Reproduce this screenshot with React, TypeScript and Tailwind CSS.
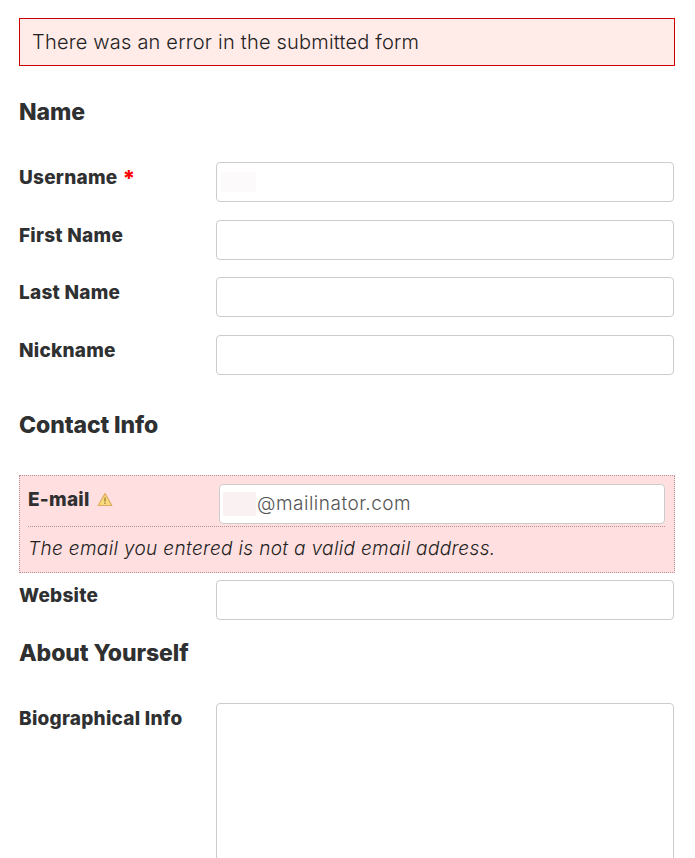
function Field({ label, required }: { label: string; required?: boolean }) {
  return (
    <div className="flex h-[40px] w-full">
      <label className="w-[197px] shrink-0 pt-[3px] text-[19px] font-extrabold leading-[26px] tracking-[0.25px] text-[#2f3031]">
        {label}
        {required && <span className="relative top-[2px] ml-[5px] text-[22px] leading-[20px] text-[#ff0000]">*</span>}
      </label>
      {required ? (
        <div className="flex h-[40px] w-[458px] items-center rounded border border-[#cccccc] bg-white pl-[4px]">
          <span className="h-[20px] w-[35px] bg-[#fcfafa]" />
        </div>
      ) : (
        <input className="h-[40px] w-[458px] rounded border border-[#cccccc] bg-white" />
      )}
    </div>
  )
}

function Heading({ children, className }: { children: string; className: string }) {
  return <h2 className={"text-[23px] font-extrabold leading-[30px] tracking-[-0.1px] text-[#2f3031] " + className}>{children}</h2>
}

function WarnIcon() {
  return (
    <svg width="16" height="15" viewBox="0 0 16 15" className="ml-[7px] mt-[5px]">
      <path d="M8 1.5 L14.8 13.5 H1.2 Z" fill="#f6dc7c" stroke="#e0ab62" strokeWidth="1.2" strokeLinejoin="round" />
      <rect x="7.3" y="5.5" width="1.4" height="4.2" fill="#a9803a" />
      <rect x="7.3" y="10.6" width="1.4" height="1.4" fill="#a9803a" />
    </svg>
  )
}

export default function App() {
  return (
    <div className="h-[858px] overflow-hidden bg-white px-[19px] pt-[18px] font-['Inter',sans-serif]">
      <div className="flex h-[48px] w-[656px] items-center border border-[#cc0000] bg-[#ffebe8] pl-[12px] text-[20px] font-light tracking-[0.2px] text-[#222222]">
        There was an error in the submitted form
      </div>

      <Heading className="mt-[31px]">Name</Heading>

      <div className="mt-[35px] flex w-[655px] flex-col gap-[18px]">
        <Field label="Username" required />
        <Field label="First Name" />
        <div className="-mt-[1px]">
          <Field label="Last Name" />
        </div>
        <Field label="Nickname" />
      </div>

      <Heading className="mt-[35px]">Contact Info</Heading>

      <div className="mt-[35px] h-[98px] w-[656px] border border-dotted border-[#b89090] bg-[#ffdfdf] pl-[8px] pr-[9px] pt-[8px]">
        <div className="flex h-[43px] border-b border-dotted border-[#b89090]">
          <span className="flex w-[191px] shrink-0 pt-[3px] text-[19px] font-extrabold leading-[26px] tracking-[0.25px] text-[#2f3031]">
            E-mail
            <WarnIcon />
          </span>
          <div className="flex h-[40px] w-[446px] items-center rounded border border-[#cccccc] bg-white pl-[3px] text-[19px] font-light tracking-[0.5px] text-[#555555]">
            <span className="mr-[1px] h-[24px] w-[33px] bg-[#f9f1f2]" />
            @mailinator.com
          </div>
        </div>
        <p className="mt-[9px] text-[19px] font-light italic leading-[26px] tracking-[0.35px] text-[#222222]">
          The email you entered is not a valid email address.
        </p>
      </div>

      <div className="mt-[7px] w-[655px]">
        <Field label="Website" />
      </div>

      <Heading className="mt-[18px]">About Yourself</Heading>

      <div className="mt-[35px] flex w-[655px]">
        <label className="w-[197px] shrink-0 pt-[3px] text-[19px] font-extrabold leading-[26px] tracking-[0.25px] text-[#2f3031]">
          Biographical Info
        </label>
        <textarea className="h-[240px] w-[458px] rounded border border-[#cccccc] bg-white" />
      </div>
    </div>
  )
}
